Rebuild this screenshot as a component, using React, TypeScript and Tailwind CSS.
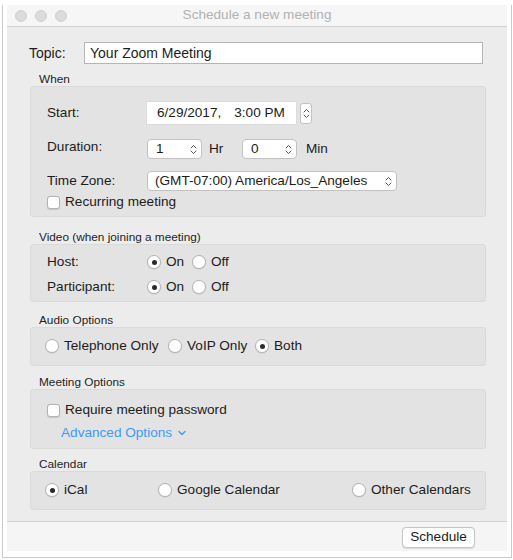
import type { ReactNode } from "react";

const font = { fontFamily: '"Liberation Sans", Arial, sans-serif' };

function Stepper() {
  return (
    <svg width="7" height="11" viewBox="0 0 7 11" fill="none" stroke="#555" strokeWidth="1" strokeLinecap="round" strokeLinejoin="round">
      <path d="M1 4 L3.5 1.5 L6 4" />
      <path d="M1 7 L3.5 9.5 L6 7" />
    </svg>
  );
}

function Radio({ checked }: { checked?: boolean }) {
  return (
    <span className="flex h-[14px] w-[14px] shrink-0 items-center justify-center rounded-full border border-[#b3b3b3] bg-white shadow-[0_0.5px_1px_rgba(0,0,0,0.12)]">
      {checked && <span className="h-[5px] w-[5px] rounded-full bg-[#2a2a2a]" />}
    </span>
  );
}

function Checkbox() {
  return (
    <span className="h-[13px] w-[13px] shrink-0 rounded-[3px] border border-[#b3b3b3] bg-white shadow-[0_0.5px_1px_rgba(0,0,0,0.12)]" />
  );
}

function RadioItem({ label, checked, className = "" }: { label: string; checked?: boolean; className?: string }) {
  return (
    <div className={`flex items-center gap-[5px] ${className}`}>
      <Radio checked={checked} />
      <span>{label}</span>
    </div>
  );
}

function Section({ title, className = "", boxClass, children }: { title: string; className?: string; boxClass: string; children: ReactNode }) {
  return (
    <div className={className}>
      <div className="h-[14px] pl-[9px] text-[11.8px] leading-[14px] text-[#1e1e1e]">{title}</div>
      <div className={`rounded-[4px] bg-[#e3e3e3] shadow-[inset_0_0_0_1px_#dadada] ${boxClass}`}>{children}</div>
    </div>
  );
}

export default function App() {
  return (
    <div className="h-[560px] w-[513px] bg-white text-[13.6px] text-[#1c1c1c]" style={font}>
      <div className="ml-[2px] mt-[5px] h-[553px] w-[510px] border-x border-b border-[#cbcbcb] px-[4px] pb-[6px]">
        <div className="flex h-full flex-col bg-[#ececec]">
          {/* title bar */}
          <div className="relative flex h-[22px] items-center justify-center border-b border-[#d2d2d2] bg-[#f6f6f6]">
            <div className="absolute left-[8px] top-[5px] flex gap-[8px]">
              <span className="h-[12px] w-[12px] rounded-full border border-[#d0d0d0] bg-[#dcdcdc]" />
              <span className="h-[12px] w-[12px] rounded-full border border-[#d0d0d0] bg-[#dcdcdc]" />
              <span className="h-[12px] w-[12px] rounded-full border border-[#d0d0d0] bg-[#dcdcdc]" />
            </div>
            <span className="text-[13.6px] text-[#b2b2b2]">Schedule a new meeting</span>
          </div>

          {/* body */}
          <div className="flex-1 pl-[23px] pr-[21px] pt-[15px]">
            <div className="flex h-[22px] items-center">
              <span className="w-[55px] -ml-[1px] text-[14px]">Topic:</span>
              <div className="flex h-[22px] w-[399px] items-center border border-[#b5b5b5] bg-white pl-[5px] text-[14px]">
                Your Zoom Meeting
              </div>
            </div>

            <Section title="When" className="mt-[8px]" boxClass="h-[131px] pl-[17px] pt-[16px]">
              <div className="flex h-[22px] items-center">
                <span className="w-[100px]">Start:</span>
                <div className="flex h-[22px] w-[149px] items-center bg-white pl-[10px] shadow-[0_0_0_0.5px_#d6d6d6]">
                  <span>6/29/2017,</span>
                  <span className="ml-[13px]">3:00 PM</span>
                </div>
                <div className="ml-[4px] flex h-[21px] w-[12px] items-center justify-center rounded-[3px] border border-[#c2c2c2] bg-white">
                  <Stepper />
                </div>
              </div>

              <div className="mt-[15px] flex h-[20px] items-center">
                <span className="-mt-[4px] w-[100px]">Duration:</span>
                <div className="flex h-[20px] w-[55px] items-center justify-between rounded-[4px] border border-[#c2c2c2] bg-white pl-[8px] pr-[4px]">
                  <span>1</span>
                  <Stepper />
                </div>
                <span className="ml-[7px] w-[33px]">Hr</span>
                <div className="flex h-[20px] w-[55px] items-center justify-between rounded-[4px] border border-[#c2c2c2] bg-white pl-[8px] pr-[4px]">
                  <span>0</span>
                  <Stepper />
                </div>
                <span className="ml-[9px]">Min</span>
              </div>

              <div className="mt-[12px] flex h-[20px] items-center">
                <span className="w-[100px]">Time Zone:</span>
                <div className="flex h-[20px] w-[250px] items-center justify-between rounded-[4px] border border-[#c2c2c2] bg-white pl-[7px] pr-[4px]">
                  <span>(GMT-07:00) America/Los_Angeles</span>
                  <Stepper />
                </div>
              </div>

              <div className="mt-[3px] flex h-[16px] items-center gap-[5px]">
                <Checkbox />
                <span>Recurring meeting</span>
              </div>
            </Section>

            <Section title="Video (when joining a meeting)" className="mt-[13px]" boxClass="h-[58px] pl-[17px] pt-[10px]">
              <div className="flex h-[16px] items-center">
                <span className="w-[100px]">Host:</span>
                <RadioItem label="On" checked className="w-[45px]" />
                <RadioItem label="Off" />
              </div>
              <div className="mt-[9px] flex h-[16px] items-center">
                <span className="w-[100px]">Participant:</span>
                <RadioItem label="On" checked className="w-[45px]" />
                <RadioItem label="Off" />
              </div>
            </Section>

            <Section title="Audio Options" className="mt-[11px]" boxClass="flex h-[39px] items-center pl-[15px]">
              <RadioItem label="Telephone Only" className="w-[123px]" />
              <RadioItem label="VoIP Only" className="w-[87px]" />
              <RadioItem label="Both" checked />
            </Section>

            <Section title="Meeting Options" className="mt-[9px]" boxClass="h-[60px] pl-[17px] pt-[13px]">
              <div className="flex h-[16px] items-center gap-[5px]">
                <Checkbox />
                <span>Require meeting password</span>
              </div>
              <div className="ml-[14px] mt-[7px] flex h-[16px] items-center gap-[6px] text-[#3d9af6]">
                <span>Advanced Options</span>
                <svg width="8" height="6" viewBox="0 0 8 6" fill="none" stroke="#3d9af6" strokeWidth="1.3" strokeLinecap="round" strokeLinejoin="round">
                  <path d="M1 1.5 L4 4.5 L7 1.5" />
                </svg>
              </div>
            </Section>

            <Section title="Calendar" className="mt-[8px]" boxClass="flex h-[39px] items-center pl-[15px]">
              <RadioItem label="iCal" checked className="w-[113px]" />
              <RadioItem label="Google Calendar" className="w-[194px]" />
              <RadioItem label="Other Calendars" />
            </Section>
          </div>

          {/* footer */}
          <div className="mt-[10px] flex h-[30px] justify-end border-t border-[#d2d2d2] bg-[#f5f5f5] pr-[32px] pt-[5px]">
            <button
              type="button"
              className="flex h-[21px] w-[73px] items-center justify-center rounded-[4px] border border-[#c4c4c4] bg-white text-[13.6px] text-[#1c1c1c] shadow-[0_0.5px_1px_rgba(0,0,0,0.1)]"
            >
              Schedule
            </button>
          </div>
        </div>
      </div>
    </div>
  );
}
